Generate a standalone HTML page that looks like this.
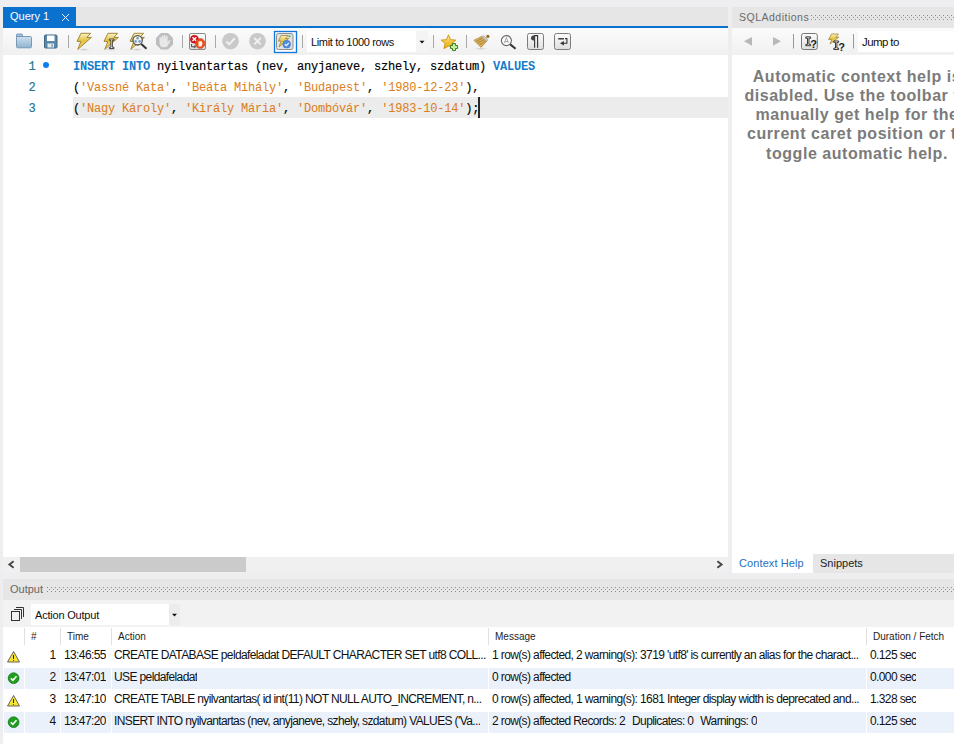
<!DOCTYPE html>
<html><head><meta charset="utf-8">
<style>
*{margin:0;padding:0;box-sizing:border-box}
html,body{width:954px;height:744px;overflow:hidden;background:#eeeef0;font-family:"Liberation Sans",sans-serif;font-size:11px;color:#1e1e1e}
.a{position:absolute}
.mono{font-family:"Liberation Mono",monospace}
#tabstrip{left:3px;top:7px;width:725px;height:19px;background:#e6e6e6}
#tab{left:3px;top:7px;width:73px;height:19px;background:#0a72ce;color:#fff}
#blueline{left:3px;top:26px;width:725px;height:2px;background:#0a72ce}
.tbar{background:linear-gradient(#fbfbfb,#f0f0f0)}
#tb{left:3px;top:28px;width:725px;height:27px}
#editor{left:3px;top:55px;width:725px;height:502px;background:#fff}
#hscroll{left:3px;top:557px;width:725px;height:16px;background:#f0f0f0}
#thumb{left:20px;top:557px;width:226px;height:15px;background:#cbcbcb}
#curline{left:73px;top:97px;width:655px;height:21px;background:#ececec}
.ln{left:20px;width:15.5px;text-align:right;color:#237893;font-size:12px;letter-spacing:-0.2px;height:21px;line-height:21px;-webkit-text-stroke:0.2px}
.code{left:73px;font-size:12px;letter-spacing:-0.2px;height:21px;line-height:21px;white-space:pre;color:#000;-webkit-text-stroke:0.15px}
.kw{color:#157ccb;font-weight:bold;-webkit-text-stroke:0}
.st{color:#dc7f1c;-webkit-text-stroke:0.05px}
#rhead{left:732px;top:7px;width:222px;height:21px;background:#e6e6e6}
#rtb{left:732px;top:28px;width:222px;height:27px}
#rcontent{left:732px;top:55px;width:222px;height:499px;background:#fff}
#rtabs{left:732px;top:554px;width:222px;height:19px;background:#e6e6e6}
#ctxtab{left:732px;top:554px;width:81px;height:19px;background:#fff}
#ohead{left:3px;top:579px;width:951px;height:21px;background:#e6e6e6}
#otb{left:3px;top:600px;width:951px;height:27px;background:#f2f2f2}
#otable{left:3px;top:627px;width:951px;height:117px;background:#fff}
.dots{background-image:radial-gradient(circle at 1px 1px,#9a9a9a 0.7px,transparent 0.9px),radial-gradient(circle at 1px 1px,#9a9a9a 0.7px,transparent 0.9px);background-size:4px 4px,4px 4px;background-position:0 0,2px 2px}
.help{left:732px;width:250px;text-align:center;font-weight:bold;font-size:16px;letter-spacing:0.55px;color:#7b7b7b;line-height:19.2px;white-space:nowrap}
.hd{font-size:10px;color:#1e1e1e;top:631px}
.csep{width:1px;top:628px;height:17px;background:#e0e0e0}
.row{left:4px;width:950px;height:21px}
.rb{background:#ebf1fb}
.cell{top:-1px;height:21px;line-height:21px;white-space:nowrap;overflow:hidden;font-size:12px;letter-spacing:-0.62px;color:#111}
.gap{top:0;width:1px;height:21px;background:#fff}
</style></head><body>
<div id="tabstrip" class="a"></div>
<div id="tab" class="a"><span class="a" style="left:7px;top:2.5px">Query 1</span></div>
<div id="blueline" class="a"></div>
<div id="tb" class="a tbar"></div>
<div id="editor" class="a"></div>
<div id="curline" class="a"></div>
<div class="a ln mono" style="top:57px">1</div>
<div class="a ln mono" style="top:78px">2</div>
<div class="a ln mono" style="top:99px">3</div>
<div class="a" style="left:43px;top:62px;width:6px;height:6px;border-radius:50%;background:#0a80f0"></div>
<div class="a code mono" style="top:57px"><span class="kw">INSERT INTO</span> nyilvantartas (nev, anyjaneve, szhely, szdatum) <span class="kw">VALUES</span></div>
<div class="a code mono" style="top:78px">(<span class="st">'Vassné Kata'</span>, <span class="st">'Beáta Mihály'</span>, <span class="st">'Budapest'</span>, <span class="st">'1980-12-23'</span>),</div>
<div class="a code mono" style="top:99px">(<span class="st">'Nagy Károly'</span>, <span class="st">'Király Mária'</span>, <span class="st">'Dombóvár'</span>, <span class="st">'1983-10-14'</span>);</div>
<div class="a" style="left:478px;top:97px;width:2px;height:21px;background:#2a2a2a"></div>
<div id="hscroll" class="a"></div>
<div id="thumb" class="a"></div>

<div id="rhead" class="a"></div>
<div class="a" style="left:739px;top:10.6px;font-size:10.5px;color:#6a6a6a;letter-spacing:0.5px">SQLAdditions</div>

<div id="rtb" class="a tbar"></div>
<div id="rcontent" class="a"></div>
<div class="a help" style="top:66.7px">Automatic context help is</div>
<div class="a help" style="top:85.9px">disabled. Use the toolbar to</div>
<div class="a help" style="top:105.1px">manually get help for the</div>
<div class="a help" style="top:124.3px">current caret position or to</div>
<div class="a help" style="top:143.5px">toggle automatic help.</div>
<div id="rtabs" class="a"></div>
<div id="ctxtab" class="a"></div>
<div class="a" style="left:739px;top:557px;color:#1f70c0;letter-spacing:0.1px">Context Help</div>
<div class="a" style="left:820px;top:557px;color:#222">Snippets</div>

<div id="ohead" class="a"></div>
<div class="a" style="left:10px;top:583px;color:#666">Output</div>

<div id="otb" class="a"></div>
<div class="a" style="left:31px;top:604px;width:149px;height:21px;background:#fff"></div>
<div class="a" style="left:169px;top:604px;width:11px;height:21px;background:#ececec"></div>
<div class="a" style="left:35px;top:609px;font-size:11px;letter-spacing:-0.2px;color:#111">Action Output</div>
<div id="otable" class="a"></div>
<div class="a csep" style="left:24px"></div>
<div class="a csep" style="left:60px"></div>
<div class="a csep" style="left:111px"></div>
<div class="a csep" style="left:488px"></div>
<div class="a csep" style="left:866px"></div>
<div class="a hd" style="left:31px">#</div>
<div class="a hd" style="left:67px">Time</div>
<div class="a hd" style="left:118px">Action</div>
<div class="a hd" style="left:495px">Message</div>
<div class="a hd" style="left:873px">Duration / Fetch</div>

<div class="a row" style="top:646px">
 <div class="a cell" style="left:0;width:51.5px;text-align:right">1</div>
 <div class="a cell" style="left:60px">13:46:55</div>
 <div class="a cell" style="left:110px">CREATE DATABASE peldafeladat DEFAULT CHARACTER SET utf8 COLL...</div>
 <div class="a cell" style="left:488px">1 row(s) affected, 2 warning(s): 3719 'utf8' is currently an alias for the charact...</div>
 <div class="a cell" style="left:866px">0.125 sec</div>
</div>
<div class="a row rb" style="top:668px">
 <div class="a gap" style="left:20px"></div><div class="a gap" style="left:56px"></div><div class="a gap" style="left:107px"></div><div class="a gap" style="left:484px"></div><div class="a gap" style="left:862px"></div>
 <div class="a cell" style="left:0;width:51.5px;text-align:right">2</div>
 <div class="a cell" style="left:60px">13:47:01</div>
 <div class="a cell" style="left:110px">USE peldafeladat</div>
 <div class="a cell" style="left:488px">0 row(s) affected</div>
 <div class="a cell" style="left:866px">0.000 sec</div>
</div>
<div class="a row" style="top:690px">
 <div class="a cell" style="left:0;width:51.5px;text-align:right">3</div>
 <div class="a cell" style="left:60px">13:47:10</div>
 <div class="a cell" style="left:110px">CREATE TABLE nyilvantartas( id int(11) NOT NULL AUTO_INCREMENT, n...</div>
 <div class="a cell" style="left:488px">0 row(s) affected, 1 warning(s): 1681 Integer display width is deprecated and...</div>
 <div class="a cell" style="left:866px">1.328 sec</div>
</div>
<div class="a row rb" style="top:712px">
 <div class="a gap" style="left:20px"></div><div class="a gap" style="left:56px"></div><div class="a gap" style="left:107px"></div><div class="a gap" style="left:484px"></div><div class="a gap" style="left:862px"></div>
 <div class="a cell" style="left:0;width:51.5px;text-align:right">4</div>
 <div class="a cell" style="left:60px">13:47:20</div>
 <div class="a cell" style="left:110px">INSERT INTO nyilvantartas (nev, anyjaneve, szhely, szdatum) VALUES ('Va...</div>
 <div class="a cell" style="left:488px">2 row(s) affected Records: 2&nbsp; <span style="margin-left:1.5px">Duplicates: 0&nbsp; </span><span style="margin-left:1.5px">Warnings: 0</span></div>
 <div class="a cell" style="left:866px">0.125 sec</div>
</div>

<!-- ICONS -->
<svg class="a" style="left:0;top:0" width="954" height="744" viewBox="0 0 954 744">
<defs>
 <linearGradient id="gBolt" x1="0" y1="0" x2="0" y2="1"><stop offset="0" stop-color="#fbf3c8"/><stop offset="0.45" stop-color="#e2c445"/><stop offset="1" stop-color="#efd97c"/></linearGradient>
 <linearGradient id="gFold" x1="0" y1="0" x2="0" y2="1"><stop offset="0" stop-color="#cfe0ee"/><stop offset="1" stop-color="#8eb2cf"/></linearGradient>
 <linearGradient id="gBox" x1="0" y1="0" x2="0" y2="1"><stop offset="0" stop-color="#fcfcfc"/><stop offset="1" stop-color="#dedede"/></linearGradient>
 <linearGradient id="gStar" x1="0" y1="0" x2="0" y2="1"><stop offset="0" stop-color="#ffe88a"/><stop offset="1" stop-color="#e9a400"/></linearGradient>
 <pattern id="dp" x="3" y="3" width="4" height="4" patternUnits="userSpaceOnUse"><rect x="0" y="0" width="1" height="1" fill="#8c8c8c"/><rect x="2" y="2" width="1" height="1" fill="#8c8c8c"/></pattern>
 <radialGradient id="gShadow"><stop offset="0" stop-color="#000" stop-opacity="0.18"/><stop offset="1" stop-color="#000" stop-opacity="0"/></radialGradient>
 <g id="bolt"><ellipse cx="7" cy="16.6" rx="6" ry="1.4" fill="url(#gShadow)"/><path d="M4,0.3 L13.6,0.3 L9.8,4.5 L14.4,4.4 L0.8,16.4 L3.8,8.6 L0,8.3 Z" fill="url(#gBolt)" stroke="#9b7a2a" stroke-width="0.9" stroke-linejoin="round"/></g>
</defs>
<rect x="811" y="15" width="143" height="5" fill="url(#dp)"/>
<rect x="47" y="587" width="907" height="5" fill="url(#dp)"/>
<!-- tab close x -->
<path d="M62,14 L69,21 M69,14 L62,21" stroke="#e8f1fb" stroke-width="1"/>
<!-- folder -->
<path d="M16.5,37 L16.5,35 Q16.5,34 17.5,34 L21.5,34 Q22.5,34 22.5,35 L22.5,37 Z" fill="#a9c4da" stroke="#6d92b0" stroke-width="0.9"/>
<rect x="16.5" y="36.5" width="15" height="11.3" rx="1.2" fill="url(#gFold)" stroke="#6d92b0" stroke-width="0.9"/>
<!-- save -->
<rect x="44.5" y="35" width="12.5" height="13" rx="1" fill="#5b87a8" stroke="#3f6886" stroke-width="1"/>
<rect x="47" y="35.5" width="7.5" height="5.5" fill="#fff"/>
<rect x="47.5" y="43.5" width="6.5" height="4" fill="#e4ecf2"/>
<rect x="51.5" y="44.3" width="1.2" height="2.6" fill="#5b87a8"/>
<!-- separators -->
<g stroke="#a8a8a8" stroke-width="1">
<line x1="68.5" y1="35" x2="68.5" y2="48"/><line x1="182.5" y1="35" x2="182.5" y2="48"/><line x1="215.5" y1="35" x2="215.5" y2="48"/>
<line x1="302.5" y1="35" x2="302.5" y2="48"/><line x1="433.5" y1="35" x2="433.5" y2="48"/><line x1="466.5" y1="35" x2="466.5" y2="48"/>
</g>
<g stroke="#8a9ab0" stroke-width="1"><line x1="793.5" y1="34" x2="793.5" y2="48.5"/><line x1="853.5" y1="34" x2="853.5" y2="48.5"/></g>
<!-- bolts -->
<use href="#bolt" x="77" y="33"/>
<use href="#bolt" x="104" y="33"/>
<path d="M109.3,39 L114,39 L114,40.3 L112.4,40.3 L112.4,47.3 L114,47.3 L114,48.5 L109.3,48.5 L109.3,47.3 L110.9,47.3 L110.9,40.3 L109.3,40.3 Z" fill="#fff" stroke="#222" stroke-width="0.8"/>
<use href="#bolt" x="130" y="33"/>
<circle cx="137.6" cy="40.3" r="4.7" fill="#f4f1dc" stroke="#555" stroke-width="1.3"/>
<circle cx="137.6" cy="38.2" r="1.3" fill="#6fa0dc"/><circle cx="135.6" cy="41.4" r="1.3" fill="#6fa0dc"/><circle cx="139.6" cy="41.4" r="1.3" fill="#6fa0dc"/>
<line x1="141.3" y1="44" x2="146.5" y2="48.8" stroke="#333" stroke-width="2"/>
<!-- stop gray -->
<path d="M160.9,33 L168,33 L173,38 L173,44.5 L168,49.5 L160.9,49.5 L156,44.5 L156,38 Z" fill="#bebebe"/>
<path d="M160.5,46 Q159.5,44 159.5,41 L159.5,37.5 Q160.4,36.8 161.2,37.5 L161.2,40.5 L161.6,36 Q162.5,35.2 163.3,36 L163.4,40 L163.8,35.3 Q164.7,34.7 165.5,35.3 L165.5,40 L166,36 Q166.8,35.4 167.6,36 L167.5,42 L169.5,40 Q170.5,39.8 170.6,40.6 L167.5,46 Q166.5,47.2 164.5,47.2 L162.5,47.2 Q161.2,47.2 160.5,46 Z" fill="#e8e8e8"/>
<!-- toggle box -->
<rect x="189.5" y="33.5" width="16" height="16" rx="1.5" fill="url(#gBox)" stroke="#8a8a8a" stroke-width="1"/>
<circle cx="194.4" cy="39.2" r="4" fill="#d8101a" stroke="#a00" stroke-width="0.5"/>
<path d="M192.5,37.3 L196.3,41.1 M196.3,37.3 L192.5,41.1" stroke="#fff" stroke-width="1.4"/>
<path d="M198.3,38.7 L202.1,38.7 L204.8,41.4 L204.8,45.5 L202.1,48.2 L198.3,48.2 L195.6,45.5 L195.6,41.4 Z" fill="#e8501a" stroke="#c43a10" stroke-width="0.6"/>
<path d="M198.5,46.5 L198.5,41.5 L201.5,41 L202.5,43.5 L201.5,46.5 Z" fill="#fff" opacity="0.9"/>
<path d="M191.6,44 L191.6,46.8 L195.5,46.8 M194.2,45.6 L195.5,46.8 L194.2,48" stroke="#333" stroke-width="0.9" fill="none"/>
<!-- gray check/x circles -->
<circle cx="230.5" cy="41.2" r="8.3" fill="#c9c9c9"/>
<path d="M226.3,41.5 L229.3,44.3 L234.8,38.3" stroke="#f0f0f0" stroke-width="2" fill="none"/>
<circle cx="257.5" cy="41.2" r="8.3" fill="#c9c9c9"/>
<path d="M254.3,38 L260.7,44.4 M260.7,38 L254.3,44.4" stroke="#f0f0f0" stroke-width="2"/>
<!-- highlighted auto-commit -->
<rect x="274.5" y="31.5" width="22" height="21" fill="#f8fbff" stroke="#1177d8" stroke-width="1.3"/>
<rect x="276.5" y="33.5" width="16.5" height="16" rx="2" fill="#e2e2e2" stroke="#8c8c8c" stroke-width="1"/>
<path d="M281,35.5 L288,35.5 L285.3,38.6 L288.6,38.5 L279,47 L281.2,41.2 L278.5,41 Z" fill="url(#gBolt)" stroke="#9b7a2a" stroke-width="0.7"/>
<circle cx="286.7" cy="44.2" r="3.9" fill="#4f8de0" stroke="#3a72c0" stroke-width="0.5"/>
<path d="M284.8,44.2 L286.3,45.7 L288.8,42.9" stroke="#fff" stroke-width="1.1" fill="none"/>
<circle cx="289.5" cy="36.3" r="1.1" fill="#3ac43a"/>
<!-- limit dropdown -->
<rect x="307" y="31" width="121" height="21" fill="#fff"/>
<rect x="416" y="31" width="12" height="21" fill="#f4f4f4"/>
<path d="M419.5,40.8 L424.5,40.8 L422,43.5 Z" fill="#111"/>
<!-- star plus -->
<path d="M448.5,34.8 L450.6,39.7 L455.8,40.1 L451.9,43.5 L453.1,48.7 L448.5,46 L443.9,48.7 L445.1,43.5 L441.2,40.1 L446.4,39.7 Z" fill="url(#gStar)" stroke="#c88a00" stroke-width="0.8" stroke-linejoin="round"/>
<path d="M452.5,43.5 L455.5,43.5 L455.5,45.5 L457.5,45.5 L457.5,48.5 L455.5,48.5 L455.5,50.5 L452.5,50.5 L452.5,48.5 L450.5,48.5 L450.5,45.5 L452.5,45.5 Z" fill="#c4f0a4" stroke="#3f7f1f" stroke-width="1" stroke-linejoin="miter"/>
<!-- broom -->
<ellipse cx="481" cy="48.8" rx="7" ry="1.1" fill="url(#gShadow)"/>
<path d="M473.8,40.3 L481.5,36.4 L486.9,40.9 L481.2,47.6 Z" fill="#dab161" stroke="#a8812f" stroke-width="0.6" stroke-linejoin="round"/>
<path d="M475.8,41.6 L483.2,37.8 M477.6,43.2 L484.9,39.3 M479.3,45 L486,40.6" stroke="#9c7428" stroke-width="0.7"/>
<path d="M477.5,39.6 L481.8,45.2 M480,38.3 L484.2,43.2" stroke="#b8913f" stroke-width="0.5"/>
<path d="M480.8,36.8 L483.6,35.6 L487.9,39.8 L486.7,41.4 Z" fill="#cfc8b0" stroke="#8a8270" stroke-width="0.4"/>
<circle cx="487.9" cy="36.4" r="1.6" fill="#9a6a22"/>
<!-- magnifier A -->
<circle cx="506.4" cy="40.6" r="5" fill="#fafafa" stroke="#666" stroke-width="1.1"/>
<path d="M504.4,43 L506.4,37.5 L508.4,43 M505,41.6 L507.8,41.6" stroke="#888" stroke-width="0.7" fill="none"/>
<line x1="510.2" y1="44.4" x2="515.6" y2="48.7" stroke="#333" stroke-width="2"/>
<!-- pilcrow box -->
<rect x="527.5" y="33.5" width="16" height="16" rx="2" fill="url(#gBox)" stroke="#7c7c7c" stroke-width="1"/>
<path d="M534.6,35.3 L534.6,47.8 M537.6,35.3 L537.6,47.8 M534.2,35.6 L538.2,35.6" stroke="#333" stroke-width="1.1" fill="none"/>
<path d="M534.8,35.2 Q531,35.2 531,38 Q531,40.6 534.8,40.6 Z" fill="#444"/>
<!-- wrap box -->
<rect x="554.5" y="33.5" width="16" height="16" rx="2" fill="url(#gBox)" stroke="#7c7c7c" stroke-width="1"/>
<path d="M558.2,38.8 L563.9,38.8" stroke="#333" stroke-width="1.4"/>
<path d="M565,38.6 L566.9,38.6 L566.9,43.3 L562.5,43.3" stroke="#333" stroke-width="1.1" fill="none"/>
<path d="M560,43.3 L563.9,41.1 L563.9,45.6 Z" fill="#333"/>
<!-- right toolbar -->
<path d="M744,41.3 L752,37 L752,45.7 Z" fill="#b8b8b8"/>
<path d="M781,41.3 L773,37 L773,45.7 Z" fill="#b8b8b8"/>
<rect x="801.5" y="33.5" width="15.8" height="16" rx="2" fill="url(#gBox)" stroke="#777" stroke-width="1"/>
<path d="M805.8,36.9 L810.6,36.9 L810.6,38.3 L808.9,38.3 L808.9,44.3 L810.6,44.3 L810.6,45.7 L805.8,45.7 L805.8,44.3 L807.5,44.3 L807.5,38.3 L805.8,38.3 Z" fill="#fff" stroke="#222" stroke-width="0.9"/>
<text x="810.2" y="47.6" font-family="Liberation Sans" font-weight="bold" font-size="11" fill="#222">?</text>
<path d="M831.5,34 L838.5,34 L835.8,37.2 L839,37.1 L830,44 L831.8,39.6 L828.6,39.5 Z" fill="url(#gBolt)" stroke="#9b7a2a" stroke-width="0.7"/>
<path d="M833.8,41 L838.6,41 L838.6,42.4 L836.9,42.4 L836.9,48.1 L838.6,48.1 L838.6,49.5 L833.8,49.5 L833.8,48.1 L835.5,48.1 L835.5,42.4 L833.8,42.4 Z" fill="#fff" stroke="#222" stroke-width="0.9"/>
<text x="838.2" y="50.6" font-family="Liberation Sans" font-weight="bold" font-size="11" fill="#222">?</text>
<rect x="858" y="31" width="96" height="21" fill="#fff"/>
<!-- scroll arrows -->
<path d="M13.6,561.2 L9.4,564.5 L13.6,567.8" stroke="#444" stroke-width="1.9" fill="none"/>
<path d="M717.4,561.2 L721.6,564.5 L717.4,567.8" stroke="#444" stroke-width="1.9" fill="none"/>
<!-- output copy icon -->
<rect x="11.5" y="611.5" width="8" height="9" fill="none" stroke="#333" stroke-width="1"/>
<path d="M14,609.5 L21.5,609.5 L21.5,619 M16,607.5 L23.5,607.5 L23.5,617" stroke="#333" stroke-width="1" fill="none"/>
<path d="M172,613.8 L177,613.8 L174.5,616.5 Z" fill="#111"/>
<!-- row icons -->
<g id="warn"><path d="M13.6,651.5 L19.5,662 L7.5,662 Z" fill="#f5e431" stroke="#555" stroke-width="0.9" stroke-linejoin="round"/><path d="M13.5,655 L13.5,659" stroke="#222" stroke-width="1"/><circle cx="13.5" cy="660.5" r="0.5" fill="#222"/></g>
<use href="#warn" x="0" y="44"/>
<g id="ok"><circle cx="13.6" cy="678.2" r="5.4" fill="#1ca01c" stroke="#0e6e0e" stroke-width="0.7"/><path d="M10.8,678.3 L12.9,680.3 L16.5,676.3" stroke="#fff" stroke-width="1.6" fill="none"/></g>
<use href="#ok" x="0" y="44"/>
</svg>
<div class="a" style="left:311px;top:36px;font-size:11px;letter-spacing:-0.35px;color:#111">Limit to 1000 rows</div>
<div class="a" style="left:862px;top:35.5px;font-size:11.5px;letter-spacing:-0.6px;color:#111">Jump to</div>
</body></html>
